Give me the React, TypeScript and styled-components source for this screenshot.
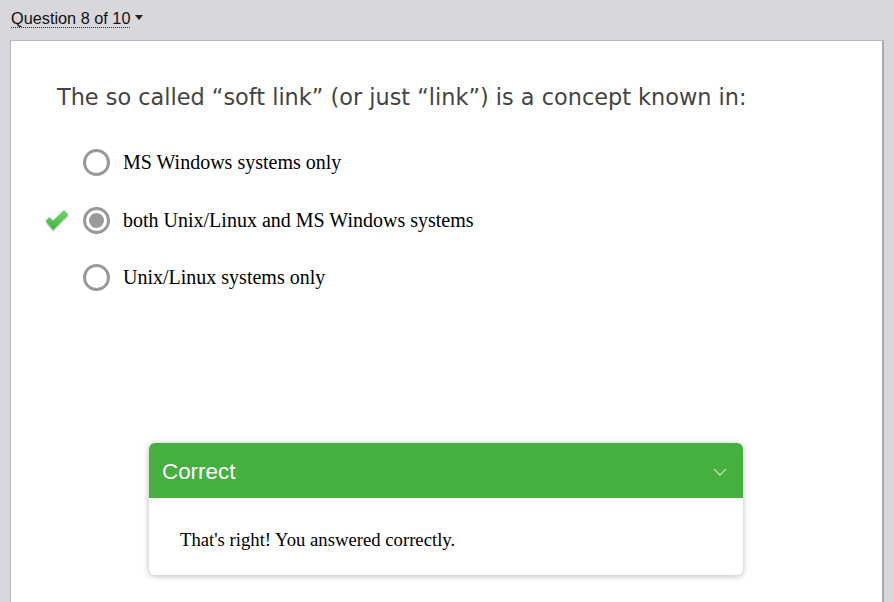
import styled, { createGlobalStyle } from 'styled-components';

const GlobalStyle = createGlobalStyle`
  html, body {
    margin: 0;
    padding: 0;
    background: #d9d7dc;
    height: 100%;
    overflow: hidden;
  }
`;

const Page = styled.div`
  width: 894px;
  height: 602px;
  display: flex;
  flex-direction: column;
  padding: 0 10px 0 10px;
  box-sizing: border-box;
  background: #d9d7dc;
`;

const TopBar = styled.div`
  height: 40px;
  display: flex;
  align-items: center;
  padding-left: 1px;
`;

const QuestionPicker = styled.button`
  display: flex;
  align-items: center;
  gap: 5px;
  border: 0;
  background: none;
  padding: 0;
  margin-top: -2px;
  font-family: 'Liberation Sans', Arial, sans-serif;
  font-size: 16.3px;
  color: #111;
  cursor: pointer;
`;

const PickerLabel = styled.span`
  border-bottom: 1px dotted #333;
  line-height: 17px;
`;

const Caret = styled.span`
  width: 0;
  height: 0;
  border-left: 4px solid transparent;
  border-right: 4px solid transparent;
  border-top: 5px solid #222;
  margin-top: -3px;
`;

const Card = styled.div`
  flex: 1;
  background: #fff;
  border: 1px solid #b8b7bb;
  border-right: 2px solid #a9a8ac;
  border-bottom: 0;
  display: flex;
  flex-direction: column;
`;

const QuestionText = styled.h2`
  margin: 43px 0 0 46px;
  font-family: 'DejaVu Sans', Verdana, sans-serif;
  font-weight: normal;
  font-size: 22.4px;
  color: #444;
`;

const Options = styled.div`
  display: flex;
  flex-direction: column;
  gap: 30.5px;
  margin-top: 39px;
`;

const Option = styled.label`
  display: flex;
  align-items: center;
  height: 27px;
  font-family: 'Liberation Serif', 'Times New Roman', serif;
  font-size: 20px;
  color: #000;
`;

const MarkSlot = styled.span`
  width: 72px;
  display: flex;
  justify-content: flex-end;
  padding-right: 12px;
  box-sizing: border-box;
`;

const Radio = styled.span<{ $checked?: boolean }>`
  width: 27px;
  height: 27px;
  box-sizing: border-box;
  border: 3px solid #9a9a9a;
  border-radius: 50%;
  margin-right: 13px;
  display: flex;
  align-items: center;
  justify-content: center;

  &::after {
    content: '';
    width: 15px;
    height: 15px;
    border-radius: 50%;
    background: ${({ $checked }) => ($checked ? '#9a9a9a' : 'transparent')};
  }
`;

const Spacer = styled.div`
  flex: 1;
`;

const Feedback = styled.div`
  align-self: flex-start;
  margin: 0 0 27px 138px;
  width: 594px;
  border-radius: 6px;
  overflow: hidden;
  background: #fff;
  box-shadow: 0 1px 6px rgba(0, 0, 0, 0.28);
`;

const FeedbackHeader = styled.div`
  height: 55px;
  box-sizing: border-box;
  background: #46b03f;
  display: flex;
  align-items: center;
  justify-content: space-between;
  padding: 3px 16px 0 13px;
  font-family: 'Liberation Sans', Arial, sans-serif;
  font-size: 22.4px;
  color: #fff;
`;

const FeedbackBody = styled.div`
  padding: 31px 31px 24px;
  font-family: 'Liberation Serif', 'Times New Roman', serif;
  font-size: 18.7px;
  color: #000;
`;

const options = [
  { text: 'MS Windows systems only', checked: false, correct: false },
  { text: 'both Unix/Linux and MS Windows systems', checked: true, correct: true },
  { text: 'Unix/Linux systems only', checked: false, correct: false },
];

function CheckMark() {
  return (
    <svg width="26" height="25" viewBox="0 0 26 25" style={{ marginTop: 2 }}>
      <defs>
        <linearGradient id="chk" x1="0" y1="0" x2="0" y2="1">
          <stop offset="0" stopColor="#72d86c" />
          <stop offset="1" stopColor="#3bb539" />
        </linearGradient>
      </defs>
      <path d="M0.5 14 L4.5 10 L8 13.5 L19 3 L23.5 7.5 L8 23 Z" fill="#d3d3d3" />
      <path d="M0.5 12 L4.5 8 L8 11.5 L19 1 L23.5 5.5 L8 21 Z" fill="url(#chk)" />
    </svg>
  );
}

export default function App() {
  return (
    <>
      <GlobalStyle />
      <Page>
        <TopBar>
          <QuestionPicker>
            <PickerLabel>Question 8 of 10</PickerLabel>
            <Caret />
          </QuestionPicker>
        </TopBar>
        <Card>
          <QuestionText>
            The so called “soft link” (or just “link”) is a concept known in:
          </QuestionText>
          <Options>
            {options.map((o) => (
              <Option key={o.text}>
                <MarkSlot>{o.correct && <CheckMark />}</MarkSlot>
                <Radio $checked={o.checked} />
                {o.text}
              </Option>
            ))}
          </Options>
          <Spacer />
          <Feedback>
            <FeedbackHeader>
              Correct
              <svg width="14" height="9" viewBox="0 0 14 9">
                <path d="M1 1 L7 7 L13 1" fill="none" stroke="#b9e3b5" strokeWidth="1.3" />
              </svg>
            </FeedbackHeader>
            <FeedbackBody>That's right! You answered correctly.</FeedbackBody>
          </Feedback>
        </Card>
      </Page>
    </>
  );
}
